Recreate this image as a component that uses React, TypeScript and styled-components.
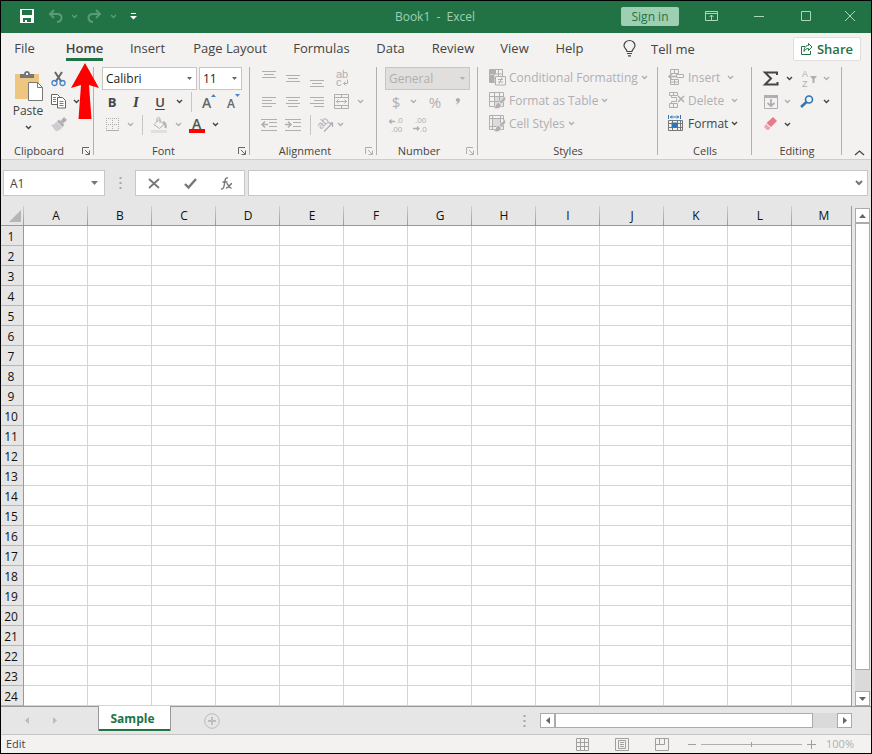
import React from "react";
import styled, { createGlobalStyle, css } from "styled-components";

const green = "#217346";
const ink = "#444444";
const dim = "#b1aeb1";
const line = "#b3b0ad";

const Global = createGlobalStyle`
  *, *::before, *::after { box-sizing: border-box; }
  body { margin: 0; background: #e6e6e6; }
  body, button, input, select {
    font-family: "Open Sans", "Noto Sans", sans-serif;
    font-size: 12px;
    color: ${ink};
  }
  button { border: 0; padding: 0; background: none; white-space: nowrap; }
`;

const Window = styled.div`
  position: relative;
  min-height: 100vh;
  display: flex;
  flex-direction: column;
  border: 1px solid #000;
  background: #e6e6e6;
`;

const Icon = styled.svg<{ $crisp?: boolean }>`
  display: block;
  flex: none;
  overflow: visible;
  fill: none;
  stroke: currentColor;
  ${(p) => p.$crisp && css`shape-rendering: crispEdges;`}
`;
const Glyph = styled.text<{ $size: number }>`
  font-size: ${(p) => p.$size}px;
  font-weight: ${(p) => (p.$size < 12 ? 400 : 600)};
  ${(p) => p.$size < 12 && css`font-family: "Liberation Sans", sans-serif;`}
  fill: currentColor;
  stroke: none;
`;

/* Title bar */
const TitleBar = styled.header`
  height: 32px;
  display: grid;
  grid-template-columns: 1fr auto 1fr;
  align-items: center;
  padding-bottom: 2px;
  background: ${green};
  color: #9fd0b4;
`;
const QuickAccess = styled.div`
  display: flex;
  align-items: center;
  padding-left: 14px;
`;
const QuickButton = styled.button<{ $w: number; $on?: boolean }>`
  width: ${(p) => p.$w}px;
  height: 28px;
  display: grid;
  place-items: center;
  color: ${(p) => (p.$on ? "#ffffff" : "#5b9b78")};
`;
const Title = styled.h1`
  margin: 0;
  padding-right: 2px;
  font-size: 12px;
  font-weight: 400;
  white-space: pre;
`;
const WindowControls = styled.div`
  display: flex;
  justify-content: flex-end;
  align-items: center;
`;
const SignIn = styled.button`
  width: 58px;
  height: 19px;
  margin-right: 9px;
  border-radius: 2px;
  background: #9fcfb3;
  color: ${green};
  line-height: 19px;
`;
const WinButton = styled.button`
  width: 47px;
  height: 30px;
  display: grid;
  place-items: center;
  color: #a9d6bc;
  &:last-child { width: 42px; }
`;

/* Ribbon tabs */
const TabBar = styled.nav`
  height: 31px;
  display: flex;
  align-items: center;
  background: #f3f2f1;
`;
const Tab = styled.button<{ $w: number; $active?: boolean }>`
  width: ${(p) => p.$w}px;
  height: 31px;
  display: flex;
  justify-content: center;
  font-size: 13px;
  line-height: 31px;
  font-weight: ${(p) => (p.$active ? 600 : 400)};
  span {
    height: 28px;
    border-bottom: 3px solid ${(p) => (p.$active ? green : "transparent")};
  }
`;
const TellMe = styled.button`
  display: flex;
  align-items: center;
  gap: 15px;
  margin-left: 31px;
  font-size: 13px;
`;
const Share = styled.button`
  display: flex;
  align-items: center;
  justify-content: center;
  gap: 4px;
  width: 68px;
  height: 24px;
  margin: 0 10px 0 auto;
  border: 1px solid #e1dfdd;
  border-radius: 2px;
  background: #fff;
  color: ${green};
  font-size: 13px;
  font-weight: 600;
`;

/* Ribbon */
const Ribbon = styled.section`
  height: 96px;
  display: flex;
  background: #f3f2f1;
  border-bottom: 1px solid #cfcdcb;
`;
const Group = styled.div<{ $w: number }>`
  width: ${(p) => p.$w}px;
  flex: none;
  display: flex;
  flex-direction: column;
  justify-content: space-between;
  padding-top: 3px;
  background: linear-gradient(${line}, ${line}) right 0 top 3px / 1px 88px no-repeat;
`;
const GroupBody = styled.div<{ $x: number }>`
  display: flex;
  padding-left: ${(p) => p.$x}px;
`;
const GroupFoot = styled.div`
  display: flex;
  height: 17px;
  line-height: 17px;
`;
const GroupName = styled.span`
  flex: 1;
  text-align: center;
  font-size: 11px;
`;
const Launcher = styled.button<{ $off?: boolean }>`
  width: 17px;
  display: grid;
  place-items: center;
  color: ${(p) => (p.$off ? dim : "#666")};
`;
const Rows = styled.div`
  display: flex;
  flex-direction: column;
`;
const Row = styled.div<{ $x?: number }>`
  height: 23px;
  display: flex;
  align-items: center;
  padding-left: ${(p) => p.$x ?? 0}px;
`;
const Tool = styled.button<{ $w?: number; $off?: boolean }>`
  width: ${(p) => p.$w ?? 24}px;
  height: 23px;
  flex: none;
  display: grid;
  place-items: center;
  color: ${(p) => (p.$off ? dim : ink)};
`;
const Letter = styled.span<{ $kind: "bold" | "italic" | "underline" | "symbol" }>`
  font-size: ${(p) => (p.$kind === "symbol" ? 15 : 13)}px;
  line-height: 16px;
  font-weight: ${(p) => (p.$kind === "bold" ? 700 : p.$kind === "symbol" ? 400 : 600)};
  ${(p) => p.$kind === "italic" && css`font-family: "Liberation Serif", serif; font-style: italic; font-size: 15px;`}
  ${(p) => p.$kind === "underline" && css`text-decoration: underline; text-underline-offset: 2px;`}
`;
const Rule = styled.i`
  width: 1px;
  height: 20px;
  margin: 0 4px 0 5px;
  background: #c8c6c4;
`;
const Wide = styled.button<{ $off?: boolean }>`
  height: 23px;
  display: flex;
  align-items: center;
  gap: 3px;
  padding-bottom: 2px;
  color: ${(p) => (p.$off ? dim : ink)};
`;
const WideName = styled.span<{ $w?: number }>`
  min-width: ${(p) => p.$w ?? 0}px;
  text-align: left;
`;
const PasteButton = styled.button`
  width: 34px;
  margin-right: 1px;
  display: flex;
  flex-direction: column;
  align-items: center;
  padding-top: 4px;
  line-height: 20px;
`;
const Picker = styled.label<{ $w: number; $off?: boolean }>`
  position: relative;
  width: ${(p) => p.$w}px;
  height: 23px;
  margin-right: 2px;
  color: #666;
  select {
    appearance: none;
    width: 100%;
    height: 23px;
    padding: 0 0 0 3px;
    border: 1px solid #c8c6c4;
    border-radius: 0;
    background: ${(p) => (p.$off ? "#e1dfdd" : "#fff")};
    color: ${(p) => (p.$off ? dim : "#222")};
    opacity: 1;
  }
  svg { position: absolute; right: 5px; top: 10px; color: ${(p) => (p.$off ? dim : "#666")}; }
`;
const Collapse = styled.button`
  margin-left: auto;
  padding: 0 6px 3px 0;
  align-self: flex-end;
`;

/* Formula bar */
const FormulaBar = styled.section`
  height: 46px;
  display: flex;
  align-items: center;
  padding: 0 3px 0 2px;
`;
const Field = styled.div<{ $w?: number }>`
  ${(p) => (p.$w ? `width: ${p.$w}px;` : "flex: 1;")}
  height: 26px;
  display: flex;
  align-items: center;
  border: 1px solid #c6c6c6;
  background: #fff;
  input {
    flex: 1;
    min-width: 0;
    height: 24px;
    padding: 0 6px;
    border: 0;
    outline: 0;
    background: none;
  }
`;
const FieldButton = styled.button<{ $w: number }>`
  width: ${(p) => p.$w}px;
  height: 24px;
  display: grid;
  place-items: center;
  color: #777;
`;
const Grip = styled.div<{ $w: number }>`
  width: ${(p) => p.$w}px;
  display: grid;
  place-items: center;
  color: #a6a6a6;
`;

/* Sheet */
const SheetArea = styled.main`
  display: flex;
`;
const Grid = styled.table`
  flex: 1;
  width: 0;
  table-layout: fixed;
  border-collapse: separate;
  border-spacing: 0;
  border-right: 1px solid #999;
  th { padding: 0; font-weight: 400; color: #111; line-height: 18px; }
  thead th {
    height: 20px;
    border-bottom: 1px solid #999;
    background: linear-gradient(#d0d0d0, #9a9a9a) right / 1px 100% no-repeat #e6e6e6;
  }
  thead th:last-child { padding-left: 5px; background: #e6e6e6; }
  thead th:first-child svg { margin: 0 3px 0 auto; }
  tbody th {
    height: 20px;
    padding: 2px 2px 0 0;
    line-height: 17px;
    border-right: 1px solid #999;
    border-bottom: 1px solid #b5b5b5;
    background: #e6e6e6;
  }
  td {
    height: 20px;
    padding: 0;
    border-right: 1px solid #d4d4d4;
    border-bottom: 1px solid #d4d4d4;
    background: #fff;
  }
  td:last-child { border-right: 0; }
`;
const HeadCol = styled.col`width: 23px;`;
const Col = styled.col`width: 64px;`;

const VScroll = styled.div`
  width: 15px;
  margin: 2px 1px 0 3px;
  display: flex;
  flex-direction: column;
  background: #dadada;
`;
const HScroll = styled.div`
  width: 312px;
  height: 15px;
  display: flex;
  background: #dadada;
`;
const ScrollButton = styled.button`
  width: 15px;
  height: 15px;
  flex: none;
  display: grid;
  place-items: center;
  border: 1px solid #ababab;
  background: #fff;
  color: #666;
`;
const Thumb = styled.div<{ $rest: number }>`
  flex: 1;
  border: 1px solid #ababab;
  background: #fff;
  ${HScroll} & { margin-right: ${(p) => p.$rest}px; }
  ${VScroll} & { margin-bottom: ${(p) => p.$rest}px; }
`;

const SheetTabs = styled.nav`
  height: 28px;
  display: flex;
  align-items: center;
  border-top: 1px solid #999;
  padding: 0 19px 0 14px;
`;
const NavButton = styled.button<{ $w: number }>`
  width: ${(p) => p.$w}px;
  height: 20px;
  display: grid;
  place-items: center;
  color: #bcbcbc;
`;
const SheetTab = styled.button`
  align-self: flex-start;
  width: 73px;
  height: 25px;
  margin: -1px 27px 0 27px;
  padding-right: 4px;
  border: solid #999;
  border-width: 0 1px;
  background: #fff;
  box-shadow: inset 0 -2px ${green};
  color: ${green};
  font-weight: 700;
  line-height: 25px;
`;
const Spacer = styled.div`flex: 1;`;

/* Status bar */
const Status = styled.footer`
  height: 19px;
  display: flex;
  align-items: center;
  padding: 0 17px 0 5px;
  border-top: 1px solid #c8c6c4;
  background: #f3f2f1;
  font-size: 11px;
  line-height: 18px;
`;
const ViewButton = styled.button`
  width: 40px;
  height: 18px;
  display: grid;
  place-items: center;
  color: #a19f9d;
`;
const ZoomButton = styled(ViewButton)`width: 19px;`;
const ZoomRange = styled.input`
  appearance: none;
  width: 101px;
  height: 9px;
  margin: 0;
  background: linear-gradient(#b1aeab, #b1aeab) center / 100% 1px no-repeat;
  &::-webkit-slider-thumb { appearance: none; width: 1px; height: 5px; background: #a19f9d; }
`;
const ZoomValue = styled.output`
  width: 33px;
  text-align: right;
  color: ${dim};
`;
const Pointer = styled.svg`
  position: absolute;
  left: 69px;
  top: 61px;
  fill: #ff0000;
`;

/* Icons */
const Chevron = () => (
  <Icon width="7" height="5" viewBox="0 0 7 5" strokeWidth="1.4"><path d="M1 1l2.5 2.5L6 1" /></Icon>
);
type Dir = "up" | "down" | "left" | "right";
const triangles: Record<Dir, [number, number, string]> = {
  down: [7, 4, "M0 0h7L3.5 4z"],
  up: [7, 4, "M0 4h7L3.5 0z"],
  left: [4, 7, "M4 0v7L0 3.5z"],
  right: [4, 7, "M0 0v7L4 3.5z"],
};
const Triangle = ({ dir, small }: { dir: Dir; small?: boolean }) => {
  const [w, h, d] = triangles[dir];
  return (
    <Icon width={small ? 5 : w} height={small ? 3 : h} viewBox={`0 0 ${w} ${h}`}>
      <path d={d} fill="currentColor" stroke="none" />
    </Icon>
  );
};
const Drop = ({ w = 14, off, label }: { w?: number; off?: boolean; label: string }) => (
  <Tool $w={w} $off={off} aria-label={label}><Chevron /></Tool>
);
const Lines = ({ rows }: { rows: [number, number, number][] }) => (
  <Icon $crisp width="16" height="16" viewBox="0 0 16 16">
    {rows.map(([x, y, w]) => <path key={y} d={`M${x} ${y}.5h${w}`} />)}
  </Icon>
);
const Dots = () => (
  <Icon width="3" height="12" viewBox="0 0 3 12"><path d="M.5 0h2v2h-2zM.5 5h2v2h-2zM.5 10h2v2h-2z" fill="currentColor" stroke="none" /></Icon>
);
const LaunchIcon = () => (
  <Icon width="8" height="8" viewBox="0 0 8 8"><path d="M.5 7V.5H7M3 3l4 4M7.5 3.5v4h-4" /></Icon>
);
const Brush = () => (
  <>
    <path d="M16.500 4v4L12 12l-2-2z" fill="currentColor" stroke="#f3f2f1" strokeWidth=".6" />
    <path d="M9.500 10.500c-3 0-2 4-5 5.500 4 1.500 8 .5 7.500-3.500z" fill="currentColor" stroke="#f3f2f1" strokeWidth=".6" />
  </>
);
const ConditionalIcon = () => (
  <Icon width="17" height="17" viewBox="0 0 17 17">
    <path d="M.5.5h13v13H.5zM.5 5h13M.5 9.500h13M5 .5v13M9.500.5v13" />
    <path d="M1 1h6v4H1zM1 6h4v7H1z" fill="currentColor" stroke="none" />
    <path d="M6.500 7.500h10v8.500h-10z" fill="#f3f2f1" />
    <path d="M9 10.500h5M9 13h5M13 8.500l-3 6" />
  </Icon>
);
const TableIcon = () => (
  <Icon width="17" height="17" viewBox="0 0 17 17">
    <path d="M5 4h9v9H5z" fill="#dcdadb" stroke="none" />
    <path d="M.5.5h14v14H.5zM.5 4.500h14M.5 9.500h14M5.500.5v14M10.500.5v14" />
    <Brush />
  </Icon>
);
const CellIcon = () => (
  <Icon width="17" height="17" viewBox="0 0 17 17">
    <path d="M4 4h7v7H4z" fill="#dcdadb" stroke="none" />
    <path d="M.5.5h14v14H.5zM.5 3.500h14M3.500.5v14M.5 11.500h14M11.500.5v14" />
    <Brush />
  </Icon>
);
const InsertIcon = () => (
  <Icon width="17" height="17" viewBox="0 0 17 17">
    <path d="M2.500.5h8v4h-8zM6.500.5v4M2.500 10.500h8v5h-8zM6.500 10.500v5M2.500 13h8M8.500 5.500h7v3h-7z" />
    <path d="M8 7.500H1M4 4.500l-3 3 3 3" strokeWidth="1.500" />
  </Icon>
);
const DeleteIcon = () => (
  <Icon width="17" height="17" viewBox="0 0 17 17">
    <path d="M1.500.5h8v3h-8zM5.500.5v3M1.500 11.500h8v4h-8zM5.500 11.500v4M3.500 3.500v2h5v4h-5v2" />
    <path d="M10 4l6 6M16 4l-6 6" strokeWidth="1.500" />
  </Icon>
);
const FormatIcon = () => (
  <Icon width="17" height="17" viewBox="0 0 17 17">
    <path d="M.5 5.500h14v10H.5zM.5 8.500h14M.5 12.500h14M4.500 5.500v10M9.500 5.500v10M12.500 5.500v10" stroke="#777" />
    <path d="M3.500 7.500h6v5h-6z" fill="#2e75b6" stroke="none" />
    <path d="M.5 0v4M12.500 0v4M2 2h9M4 .5L2.500 2 4 3.500M9 .5L10.500 2 9 3.500" stroke="#2e75b6" />
  </Icon>
);

const tabs: [string, number][] = [
  ["File", 47], ["Home", 73], ["Insert", 53], ["Page Layout", 112], ["Formulas", 71],
  ["Data", 67], ["Review", 58], ["View", 65], ["Help", 45],
];
const columns = "ABCDEFGHIJKLM".split("");
const rowNumbers = Array.from({ length: 24 }, (_, i) => i + 1);

const Foot = ({ name, launcher, off }: { name: string; launcher?: boolean; off?: boolean }) => (
  <GroupFoot>
    <GroupName>{name}</GroupName>
    {launcher && <Launcher $off={off} aria-label={`${name} settings`}><LaunchIcon /></Launcher>}
  </GroupFoot>
);

const ClipboardGroup = () => (
  <Group $w={93}>
    <GroupBody $x={10}>
      <PasteButton>
        <Icon width="29" height="30" viewBox="0 0 29 30">
          <path d="M1 3h24v25H1z" fill="#eec67f" stroke="none" />
          <path d="M6 7V3h4c0-4 6-4 6 0h4v4z" fill="#777" stroke="none" />
          <path d="M12 3h2" stroke="#f3f2f1" strokeWidth="2" />
          <path d="M14.500 11.500h9l5 5v13h-14z" fill="#fff" stroke="#777" />
          <path d="M23.500 11.500v5h5" stroke="#777" />
        </Icon>
        Paste
        <Icon width="7" height="9" viewBox="0 -4 7 9" strokeWidth="1.4"><path d="M1 1l2.500 2.500L6 1" /></Icon>
      </PasteButton>
      <Rows>
        <Row $x={1}>
          <Tool aria-label="Cut">
            <Icon width="16" height="16" viewBox="0 0 16 16">
              <path d="M4 1l6.500 10M11 1L4.500 11" stroke="#666" strokeWidth="2" />
              <circle cx="3.500" cy="12" r="2.500" stroke="#4a86c5" strokeWidth="1.300" />
              <circle cx="11.500" cy="12" r="2.500" stroke="#4a86c5" strokeWidth="1.300" />
            </Icon>
          </Tool>
        </Row>
        <Row $x={1}>
          <Tool aria-label="Copy">
            <Icon width="16" height="15" viewBox="0 0 16 15">
              <path d="M.5.5h6l2 2v8h-8z" fill="#fff" stroke="#666" />
              <path d="M2 3.500h3M2 5.500h3M2 7.500h3" stroke="#4a86c5" />
              <path d="M6.500 3.500h5l3 3v7.500h-8z" fill="#fff" stroke="#666" />
              <path d="M8.500 7.500h4M8.500 9.500h4M8.500 11.500h4" stroke="#4a86c5" />
            </Icon>
          </Tool>
          <Drop w={10} label="Copy options" />
        </Row>
        <Row $x={1}>
          <Tool $off aria-label="Format Painter">
            <Icon width="16" height="15" viewBox="0 0 16 15">
              <path d="M13 0l3 3-4 3.500L9.500 4z" fill="currentColor" stroke="none" />
              <path d="M7 3.500l5.500 5.500" strokeWidth="2.500" />
              <path d="M5.500 4.500l6 6C9 13 7 14 5 14.500L0 8c2 0 4-1 5.500-3.500z" fill="#cfcccf" stroke="none" />
            </Icon>
          </Tool>
        </Row>
      </Rows>
    </GroupBody>
    <Foot name="Clipboard" launcher />
  </Group>
);

const FontGroup = () => (
  <Group $w={156}>
    <GroupBody $x={6}>
      <Rows>
        <Row $x={2}>
          <Picker $w={95}>
            <select aria-label="Font"><option>Calibri</option></select>
            <Triangle dir="down" small />
          </Picker>
          <Picker $w={43}>
            <select aria-label="Font size"><option>11</option></select>
            <Triangle dir="down" small />
          </Picker>
        </Row>
        <Row>
          <Tool><Letter $kind="bold">B</Letter></Tool>
          <Tool><Letter $kind="italic">I</Letter></Tool>
          <Tool><Letter $kind="underline">U</Letter></Tool>
          <Drop label="Underline style" />
          <Rule />
          <Tool aria-label="Increase font size">
            <Icon width="16" height="16" viewBox="0 0 16 16" color="#666">
              <Glyph $size={14} x="2" y="14">A</Glyph>
              <path d="M11 3h5l-2.500-3z" fill="#4a86c5" stroke="none" />
            </Icon>
          </Tool>
          <Tool aria-label="Decrease font size">
            <Icon width="16" height="16" viewBox="0 0 16 16" color="#666">
              <Glyph $size={12} x="3" y="14">A</Glyph>
              <path d="M11 0h5l-2.500 3z" fill="#4a86c5" stroke="none" />
            </Icon>
          </Tool>
        </Row>
        <Row>
          <Tool $off aria-label="Borders">
            <Icon $crisp width="13" height="14" viewBox="0 0 13 14">
              <path d="M.5 0v12M6.500 0v12M12.500 0v12M0 .5h13M0 6.500h13" strokeDasharray="1 1" />
              <path d="M0 12.500h13" />
            </Icon>
          </Tool>
          <Drop w={13} off label="Border style" />
          <Rule />
          <Tool $off aria-label="Fill color">
            <Icon width="17" height="16" viewBox="0 0 17 16">
              <path d="M3 7.500l5-5 5 5-4.500 4-5.500-4zM6 5V2c0-2 3-2 3 0v4" />
              <path d="M12 5c3 1 3 3 2.500 6" strokeWidth="2" />
              <path d="M0 13h16v3H0z" fill="#e1dfe1" stroke="none" />
            </Icon>
          </Tool>
          <Drop off label="Fill options" />
          <Tool aria-label="Font color">
            <Icon width="16" height="16" viewBox="0 0 16 16" color="#555">
              <Glyph $size={14} x="3" y="12">A</Glyph>
              <path d="M0 12h16v4H0z" fill="#f00" stroke="none" />
            </Icon>
          </Tool>
          <Drop w={12} label="Font color options" />
        </Row>
      </Rows>
    </GroupBody>
    <Foot name="Font" launcher />
  </Group>
);

const AlignmentGroup = () => (
  <Group $w={127}>
    <GroupBody $x={7}>
      <Rows>
        <Row>
          <Tool $off aria-label="Top align"><Lines rows={[[1, 0, 14], [3, 3, 10], [1, 6, 14]]} /></Tool>
          <Tool $off aria-label="Middle align"><Lines rows={[[1, 4, 14], [3, 7, 10], [1, 10, 14]]} /></Tool>
          <Tool $off aria-label="Bottom align"><Lines rows={[[1, 9, 14], [3, 12, 10], [1, 15, 14]]} /></Tool>
          <Tool $off $w={26} aria-label="Wrap text">
            <Icon width="14" height="17" viewBox="0 0 14 17">
              <Glyph $size={11} x="1" y="8">ab</Glyph>
              <Glyph $size={11} x="1" y="16">c</Glyph>
              <path d="M12.500 9.500v4H8.500M10.500 11.500l-2 2 2 2" />
            </Icon>
          </Tool>
        </Row>
        <Row>
          <Tool $off aria-label="Align left"><Lines rows={[[1, 3, 14], [1, 6, 10], [1, 9, 14], [1, 12, 10]]} /></Tool>
          <Tool $off aria-label="Center"><Lines rows={[[1, 3, 14], [3, 6, 10], [1, 9, 14], [3, 12, 10]]} /></Tool>
          <Tool $off aria-label="Align right"><Lines rows={[[1, 3, 14], [5, 6, 10], [1, 9, 14], [5, 12, 10]]} /></Tool>
          <Tool $off $w={26} aria-label="Merge and center">
            <Icon width="16" height="15" viewBox="0 0 16 15">
              <path d="M.5.5h14v14H.5zM.5 3.500h14M.5 11.500h14M7.500.5v3M7.500 11.500v3" />
              <path d="M2.500 7.500h10M4.500 5.500l-2 2 2 2M10.500 5.500l2 2-2 2" />
            </Icon>
          </Tool>
          <Drop w={10} off label="Merge options" />
        </Row>
        <Row>
          <Tool $off aria-label="Decrease indent">
            <Icon width="16" height="14" viewBox="0 0 16 14">
              <path d="M0 1.500h16M8 4.500h8M8 8.500h8M0 12.500h16" />
              <path d="M7 6.500H1M4 3.500l-3 3 3 3" strokeWidth="1.500" />
            </Icon>
          </Tool>
          <Tool $off aria-label="Increase indent">
            <Icon width="16" height="14" viewBox="0 0 16 14">
              <path d="M0 1.500h16M8 4.500h8M8 8.500h8M0 12.500h16" />
              <path d="M0 6.500h6M3 3.500l3 3-3 3" strokeWidth="1.500" />
            </Icon>
          </Tool>
          <Rule />
          <Tool $off $w={20} aria-label="Orientation">
            <Icon width="17" height="16" viewBox="0 0 17 16">
              <Glyph $size={11} x="2" y="12" transform="rotate(-45 4 10)">ab</Glyph>
              <path d="M7 14.500l8-8M11.500 6h4v4" strokeWidth="1.300" />
            </Icon>
          </Tool>
          <Drop w={10} off label="Orientation options" />
        </Row>
      </Rows>
    </GroupBody>
    <Foot name="Alignment" launcher off />
  </Group>
);

const NumberGroup = () => (
  <Group $w={101}>
    <GroupBody $x={7}>
      <Rows>
        <Row $x={1}>
          <Picker $w={85} $off>
            <select aria-label="Number format" disabled><option>General</option></select>
            <Triangle dir="down" small />
          </Picker>
        </Row>
        <Row>
          <Tool $off><Letter $kind="symbol">$</Letter></Tool>
          <Drop w={11} off label="Currency" />
          <Tool $off $w={32}><Letter $kind="symbol">%</Letter></Tool>
          <Tool $off $w={14} aria-label="Comma style">
            <Icon width="6" height="8" viewBox="0 0 6 8"><path d="M3 0c3 0 3 5-2 6.500L.5 6C2 5.500 3 4.500 2.500 3.500 0 4 .5 0 3 0z" fill="currentColor" stroke="none" /></Icon>
          </Tool>
        </Row>
        <Row>
          <Tool $off aria-label="Increase decimal">
            <Icon width="17" height="16" viewBox="0 0 17 16">
              <path d="M7 4.500H1.500M3.500 2.500l-2 2 2 2" strokeWidth="1.300" />
              <Glyph $size={8} x="8" y="6">.0</Glyph>
              <Glyph $size={8} x="3" y="15">.00</Glyph>
            </Icon>
          </Tool>
          <Tool $off aria-label="Decrease decimal">
            <Icon width="17" height="16" viewBox="0 0 17 16">
              <path d="M1 11.500h6M5 9.500l2 2-2 2" strokeWidth="1.300" />
              <Glyph $size={8} x="3" y="6">.00</Glyph>
              <Glyph $size={8} x="8" y="15">.0</Glyph>
            </Icon>
          </Tool>
        </Row>
      </Rows>
    </GroupBody>
    <Foot name="Number" launcher off />
  </Group>
);

const StylesGroup = () => (
  <Group $w={180}>
    <GroupBody $x={11}>
      <Rows>
        <Wide $off><ConditionalIcon />Conditional Formatting<Chevron /></Wide>
        <Wide $off><TableIcon />Format as Table<Chevron /></Wide>
        <Wide $off><CellIcon />Cell Styles<Chevron /></Wide>
      </Rows>
    </GroupBody>
    <Foot name="Styles" />
  </Group>
);

const CellsGroup = () => (
  <Group $w={94}>
    <GroupBody $x={10}>
      <Rows>
        <Wide $off><InsertIcon /><WideName $w={36}>Insert</WideName><Chevron /></Wide>
        <Wide $off><DeleteIcon /><WideName $w={40}>Delete</WideName><Chevron /></Wide>
        <Wide><FormatIcon /><WideName>Format</WideName><Chevron /></Wide>
      </Rows>
    </GroupBody>
    <Foot name="Cells" />
  </Group>
);

const EditingGroup = () => (
  <Group $w={90}>
    <GroupBody $x={7}>
      <Rows>
        <Row>
          <Tool aria-label="AutoSum">
            <Icon width="16" height="15" viewBox="0 0 16 15"><path d="M14 4V1.500H2L8 7.500l-6 6h12.500V11" strokeWidth="2" /></Icon>
          </Tool>
          <Drop w={12} label="Sum options" />
          <Tool $off $w={28} aria-label="Sort and filter">
            <Icon width="17" height="18" viewBox="0 0 17 18">
              <Glyph $size={9} x="1" y="7">A</Glyph>
              <Glyph $size={9} x="1" y="17">Z</Glyph>
              <path d="M9 6h7l-2.500 3v4h-2V9z" fill="currentColor" stroke="none" />
            </Icon>
          </Tool>
          <Drop w={7} off label="Sort options" />
        </Row>
        <Row>
          <Tool $off aria-label="Fill">
            <Icon width="14" height="16" viewBox="0 0 14 16">
              <path d="M.5 1.500h13v13H.5z" /><path d="M0 1h14v3H0z" fill="currentColor" stroke="none" />
              <path d="M7 5v7M3.500 9L7 12l3.500-3" strokeWidth="1.800" />
            </Icon>
          </Tool>
          <Drop w={8} off label="Fill options" />
          <Tool $w={32} aria-label="Find and select">
            <Icon width="14" height="13" viewBox="0 0 14 13">
              <circle cx="9" cy="4.500" r="3.500" stroke="#2e75b6" strokeWidth="1.600" />
              <path d="M6.500 7L1 12" stroke="#2e75b6" strokeWidth="2.500" />
            </Icon>
          </Tool>
          <Drop w={7} label="Find options" />
        </Row>
        <Row>
          <Tool aria-label="Clear">
            <Icon width="14" height="15" viewBox="0 0 14 15">
              <path d="M9 0l4 4-6 6-4.500-4z" fill="#e8798b" stroke="none" />
              <path d="M2 7l4.500 4-2 2H3L0 10z" fill="#f0a3af" stroke="none" />
            </Icon>
          </Tool>
          <Drop w={8} label="Clear options" />
        </Row>
      </Rows>
    </GroupBody>
    <Foot name="Editing" />
  </Group>
);

export default function App() {
  return (
    <Window>
      <Global />
      <TitleBar>
        <QuickAccess>
          <QuickButton $w={24} $on aria-label="Save">
            <Icon width="14" height="14" viewBox="0 0 14 14">
              <path fillRule="evenodd" d="M0 0h14v14H0zM2 1v5h10V1zM3 9v4h2v-2h2v2h4V9z" fill="currentColor" stroke="none" />
            </Icon>
          </QuickButton>
          <QuickButton $w={32} aria-label="Undo">
            <Icon width="15" height="14" viewBox="0 0 15 14" strokeWidth="2">
              <path d="M6 1L2 5l4 4M2 5h7c6 0 6 7 0 8" />
            </Icon>
          </QuickButton>
          <QuickButton $w={7} aria-label="Undo history"><Chevron /></QuickButton>
          <QuickButton $w={32} aria-label="Redo">
            <Icon width="15" height="14" viewBox="0 0 15 14" strokeWidth="2">
              <path d="M9 1l4 4-4 4M13 5H6c-6 0-6 7 0 8" />
            </Icon>
          </QuickButton>
          <QuickButton $w={7} aria-label="Redo history"><Chevron /></QuickButton>
          <QuickButton $w={33} $on aria-label="Customize toolbar">
            <Icon width="7" height="7" viewBox="0 0 7 7"><path d="M1 .5h5" /><path d="M0 3h7L3.500 6.500z" fill="currentColor" stroke="none" /></Icon>
          </QuickButton>
        </QuickAccess>
        <Title>{"Book1  -  Excel"}</Title>
        <WindowControls>
          <SignIn>Sign in</SignIn>
          <WinButton aria-label="Ribbon display options">
            <Icon width="13" height="10" viewBox="0 0 13 10"><path d="M.5.5h12v9H.5zM.5 2.500h12M6.500 9V4M4.500 6l2-2 2 2" /></Icon>
          </WinButton>
          <WinButton aria-label="Minimize"><Icon width="10" height="1" viewBox="0 0 10 1"><path d="M0 .5h10" /></Icon></WinButton>
          <WinButton aria-label="Maximize"><Icon width="10" height="10" viewBox="0 0 10 10"><path d="M.5.5h9v9h-9z" /></Icon></WinButton>
          <WinButton aria-label="Close"><Icon width="10" height="10" viewBox="0 0 10 10"><path d="M0 0l10 10M10 0L0 10" /></Icon></WinButton>
        </WindowControls>
      </TitleBar>

      <TabBar>
        {tabs.map(([name, w]) => (
          <Tab key={name} $w={w} $active={name === "Home"}><span>{name}</span></Tab>
        ))}
        <TellMe>
          <Icon width="13" height="17" viewBox="0 0 13 17" strokeWidth="1.200">
            <path d="M4 11.500C4 9 1 8.500 1 5.500a5.500 5 0 0111 0c0 3-3 3.500-3 6zM4 13.500h5M5 15.800h3" />
          </Icon>
          Tell me
        </TellMe>
        <Share>
          <Icon width="12" height="12" viewBox="0 0 12 12">
            <path d="M4 3.500H.5v8h9V8" /><path d="M7.500.5L11 4 7.500 7.500V5.500C5.500 5.500 4 6.500 3 8.500c0-4 2-6 4.500-6z" />
          </Icon>
          Share
        </Share>
      </TabBar>

      <Ribbon>
        <ClipboardGroup />
        <FontGroup />
        <AlignmentGroup />
        <NumberGroup />
        <StylesGroup />
        <CellsGroup />
        <EditingGroup />
        <Collapse aria-label="Collapse ribbon">
          <Icon width="11" height="6" viewBox="0 0 11 6" strokeWidth="1.300"><path d="M1 5l4.500-4L10 5" /></Icon>
        </Collapse>
      </Ribbon>

      <FormulaBar>
        <Field $w={102}>
          <input aria-label="Name box" defaultValue="A1" />
          <FieldButton $w={20} aria-label="Named ranges"><Triangle dir="down" /></FieldButton>
        </Field>
        <Grip $w={30}><Dots /></Grip>
        <Field $w={110}>
          <FieldButton $w={36} aria-label="Cancel"><Icon width="12" height="11" viewBox="0 0 12 11" strokeWidth="1.800"><path d="M1 1l10 9M11 1L1 10" /></Icon></FieldButton>
          <FieldButton $w={36} aria-label="Enter"><Icon width="13" height="11" viewBox="0 0 13 11" strokeWidth="2.400"><path d="M1 6l3.500 3.500L12 1" /></Icon></FieldButton>
          <FieldButton $w={36} aria-label="Insert function">
            <Icon width="13" height="13" viewBox="0 0 13 13" strokeWidth="1.400">
              <path d="M8 1C5 0 5 4 4.500 6.500 4 10 3.500 12.500 1 12M2.500 5h5M6.500 6.500c2 0 2 5 5 4.500M12 6.500c-2 0-3 5-6 4.500" />
            </Icon>
          </FieldButton>
        </Field>
        <Grip $w={3} />
        <Field>
          <input aria-label="Formula" />
          <FieldButton $w={16} aria-label="Expand formula bar"><Icon width="8" height="6" viewBox="0 0 8 6" strokeWidth="2"><path d="M1 1l3 3 3-3" /></Icon></FieldButton>
        </Field>
      </FormulaBar>

      <SheetArea>
        <Grid>
          <colgroup>
            <HeadCol />
            {columns.slice(0, -1).map((c) => <Col key={c} />)}
            <col />
          </colgroup>
          <thead>
            <tr>
              <th aria-label="Select all"><Icon width="12" height="12" viewBox="0 0 12 12"><path d="M12 0v12H0z" fill="#b5b5b5" stroke="none" /></Icon></th>
              {columns.map((c) => <th key={c} scope="col">{c}</th>)}
            </tr>
          </thead>
          <tbody>
            {rowNumbers.map((r) => (
              <tr key={r}>
                <th scope="row">{r}</th>
                {columns.map((c) => <td key={c} />)}
              </tr>
            ))}
          </tbody>
        </Grid>
        <VScroll>
          <ScrollButton aria-label="Scroll up"><Triangle dir="up" /></ScrollButton>
          <Thumb $rest={21} />
          <ScrollButton aria-label="Scroll down"><Triangle dir="down" /></ScrollButton>
        </VScroll>
      </SheetArea>

      <SheetTabs>
        <NavButton $w={24} aria-label="Previous sheet"><Triangle dir="left" /></NavButton>
        <NavButton $w={32} aria-label="Next sheet"><Triangle dir="right" /></NavButton>
        <SheetTab>Sample</SheetTab>
        <NavButton $w={28} aria-label="New sheet">
          <Icon width="16" height="16" viewBox="0 0 16 16"><circle cx="8" cy="8" r="7.300" /><path d="M8 4v8M4 8h8" strokeWidth="1.800" /></Icon>
        </NavButton>
        <Spacer />
        <Grip $w={32}><Dots /></Grip>
        <HScroll>
          <ScrollButton aria-label="Scroll left"><Triangle dir="left" /></ScrollButton>
          <Thumb $rest={24} />
          <ScrollButton aria-label="Scroll right"><Triangle dir="right" /></ScrollButton>
        </HScroll>
      </SheetTabs>

      <Status>
        <span>Edit</span>
        <Spacer />
        <ViewButton aria-label="Normal view"><Icon width="13" height="13" viewBox="0 0 13 13"><path d="M.5.5h12v12H.5zM.5 4.500h12M.5 8.500h12M4.500.5v12M8.500.5v12" /></Icon></ViewButton>
        <ViewButton aria-label="Page layout view"><Icon width="14" height="13" viewBox="0 0 14 13"><path d="M.5.5h13v12H.5zM3.500 2.500h7v8h-7zM5 4.500h4M5 6.500h4M5 8.500h4" /></Icon></ViewButton>
        <ViewButton aria-label="Page break view"><Icon width="14" height="13" viewBox="0 0 14 13"><path d="M.5.5h13v12H.5zM4.500.5v6M9.500.5v6M.5 6.500h9" /></Icon></ViewButton>
        <ZoomButton aria-label="Zoom out"><Icon width="8" height="1" viewBox="0 0 8 1"><path d="M0 .5h8" /></Icon></ZoomButton>
        <ZoomRange type="range" aria-label="Zoom" min={0} max={200} defaultValue={100} />
        <ZoomButton aria-label="Zoom in"><Icon width="9" height="9" viewBox="0 0 9 9"><path d="M0 4.500h9M4.500 0v9" /></Icon></ZoomButton>
        <ZoomValue>100%</ZoomValue>
      </Status>

      <Pointer width="30" height="58" viewBox="0 0 30 58" aria-hidden="true">
        <path d="M15 1L29 26l-10-3 2.500 34h-13L11 23 1 26z" />
      </Pointer>
    </Window>
  );
}
